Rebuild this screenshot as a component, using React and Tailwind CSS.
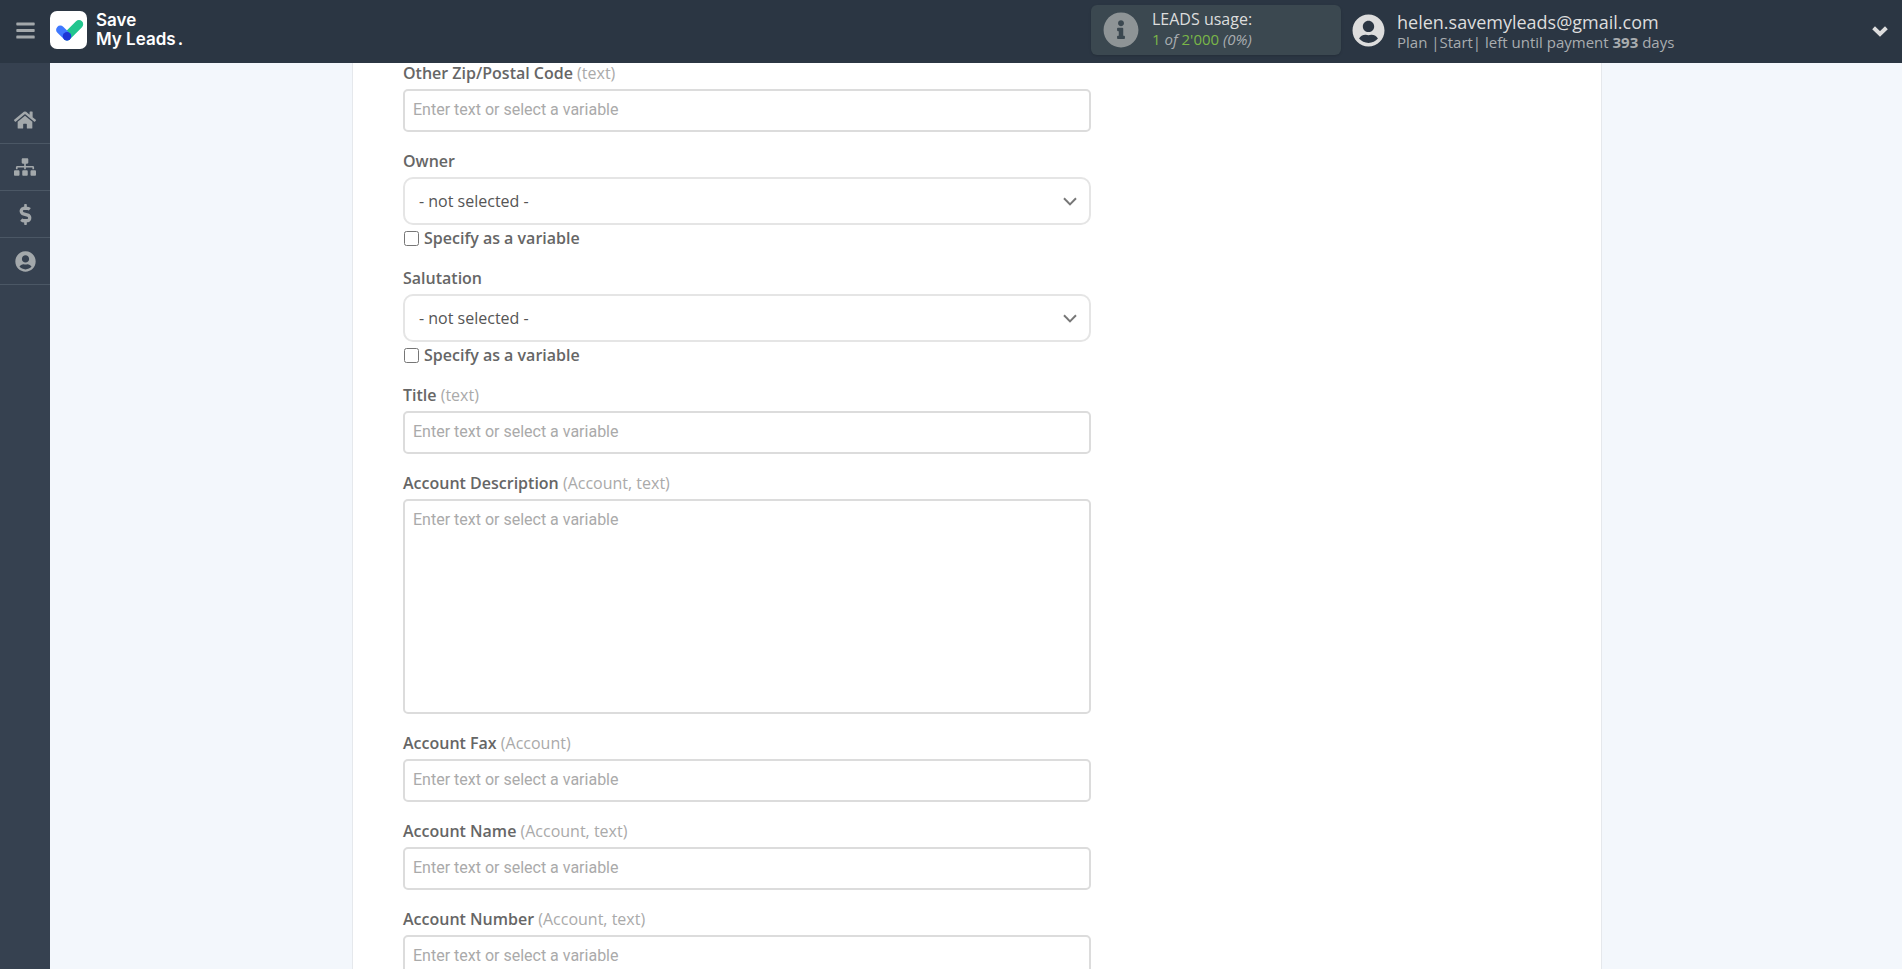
import { useState } from "react";
import {
  FaBars,
  FaDollarSign,
  FaHome,
  FaInfoCircle,
  FaSitemap,
  FaUserCircle,
} from "react-icons/fa";

const menu = [
  { label: "Home", icon: FaHome, size: "text-[22px]" },
  { label: "Connections", icon: FaSitemap, size: "text-[22px]" },
  { label: "Billing", icon: FaDollarSign, size: "text-[21px]" },
  { label: "Profile", icon: FaUserCircle, size: "text-[21px]" },
];

const fields = [
  { id: "other_zip", label: "Other Zip/Postal Code", hint: "(text)", type: "text" },
  { id: "owner", label: "Owner", type: "select" },
  { id: "salutation", label: "Salutation", type: "select" },
  { id: "title", label: "Title", hint: "(text)", type: "text" },
  { id: "account_description", label: "Account Description", hint: "(Account, text)", type: "textarea" },
  { id: "account_fax", label: "Account Fax", hint: "(Account)", type: "text" },
  { id: "account_name", label: "Account Name", hint: "(Account, text)", type: "text" },
  { id: "account_number", label: "Account Number", hint: "(Account, text)", type: "text" },
];

const placeholder = "Enter text or select a variable";

const inputClass =
  "block w-full rounded-[5px] border-2 border-[#dcdcdc] bg-white px-2 font-['Roboto',sans-serif] text-base text-[#555] placeholder:text-[#aaa] outline-none";

function Logo() {
  return (
    <a href="#" className="flex items-center gap-[9px]">
      <svg viewBox="0 0 37 38" className="h-[38px] w-[37px]" aria-hidden="true">
        <rect width="37" height="38" rx="7" fill="#fff" />
        <g strokeWidth="8.4" strokeLinecap="round" fill="none">
          <path d="M17 25.2 29 13.2" stroke="#21c58e" />
          <path d="M10.3 18.8 17 25.2" stroke="#3f78ff" />
        </g>
        <circle cx="17" cy="25.2" r="4.2" fill="#1c35d6" />
      </svg>
      <span className="font-['Inter',sans-serif] text-[17px] leading-[19px] font-semibold text-white">
        Save
        <br />
        My Leads<span className="ml-0.5">.</span>
      </span>
    </a>
  );
}

function Header() {
  return (
    <header className="flex h-[63px] shrink-0 items-center bg-[#2b3643] pb-[3px] text-[#ddd]">
      <button type="button" aria-label="Toggle menu" className="flex w-[50px] justify-center">
        <FaBars className="text-[21px] text-[#a3a8ab]" />
      </button>
      <Logo />

      <div className="ml-auto flex w-[811px] items-center">
        <div className="flex h-[50px] w-[250px] items-center gap-[13px] rounded-md bg-[#3b4850] px-3 shadow-sm">
          <FaInfoCircle className="text-[36px] text-[#8e9496]" />
          <div className="pb-0.5">
            <div className="text-base leading-5">LEADS usage:</div>
            <div className="text-[15px] leading-5 text-[#a9adb0] italic">
              <span className="text-[#7ab648] not-italic">1</span> of{" "}
              <span className="text-[#7ab648] not-italic">2'000</span> (0%)
            </div>
          </div>
        </div>
        <button type="button" className="flex flex-1 items-center gap-3 pr-3.5 pl-[11px] text-left">
          <FaUserCircle className="text-[33px] text-[#ddd]" />
          <span className="mt-1 flex-1">
            <span className="block text-lg leading-5">helen.savemyleads@gmail.com</span>
            <span className="block text-[15px] leading-5 text-[#a9adb0]">
              Plan |Start| left until payment <b>393</b> days
            </span>
          </span>
          <svg
            viewBox="0 0 16 11"
            className="mt-0.5 h-[11px] w-4"
            fill="none"
            stroke="currentColor"
            strokeWidth="4"
            aria-hidden="true"
          >
            <path d="M1.6 1.8 8 8 14.4 1.8" />
          </svg>
        </button>
      </div>
    </header>
  );
}

function Sidebar() {
  return (
    <nav className="w-[50px] shrink-0 bg-[#364150] pt-[34px]">
      {menu.map(({ label, icon: Icon, size }) => (
        <a
          key={label}
          href="#"
          aria-label={label}
          className="flex h-[47px] items-center justify-center border-b border-[#4b5765] text-[#a3a8ab]"
        >
          <Icon className={size} />
        </a>
      ))}
    </nav>
  );
}

function SelectField({ id }) {
  const [asVariable, setAsVariable] = useState(false);

  return (
    <>
      <div className="relative">
        <select
          id={id}
          className="block h-12 w-full appearance-none rounded-[10px] border-2 border-[#e5e5e5] bg-white px-3.5 text-base text-[#555] outline-none"
        >
          <option>- not selected -</option>
        </select>
        <svg
          viewBox="0 0 14 9"
          className="pointer-events-none absolute top-5 right-3.5 h-[9px] w-3.5"
          fill="none"
          stroke="#777"
          strokeWidth="2"
          aria-hidden="true"
        >
          <path d="M1 1.2 7 7.4 13 1.2" />
        </svg>
      </div>
      <label className="flex h-6 items-center gap-[5px] pt-0.5 text-base leading-5 font-semibold text-[#666]">
        <input
          type="checkbox"
          checked={asVariable}
          onChange={(e) => setAsVariable(e.target.checked)}
          className="ml-px size-[15px]"
        />
        Specify as a variable
      </label>
    </>
  );
}

function Field({ id, label, hint, type }) {
  return (
    <div>
      <label htmlFor={id} className="mb-1.5 block text-base leading-5 font-semibold text-[#666]">
        {label} {hint && <span className="font-normal text-[#aaa]">{hint}</span>}
      </label>
      {type === "text" && (
        <input id={id} type="text" placeholder={placeholder} className={`${inputClass} h-[43px] pb-0.5`} />
      )}
      {type === "textarea" && (
        <textarea
          id={id}
          placeholder={placeholder}
          className={`${inputClass} h-[215px] resize-none py-[7px]`}
        />
      )}
      {type === "select" && <SelectField id={id} />}
    </div>
  );
}

export default function App() {
  return (
    <div className="flex h-screen flex-col font-['Open_Sans',sans-serif]">
      <Header />
      <div className="flex min-h-0 flex-1">
        <Sidebar />
        <main className="flex-1 overflow-y-auto bg-[#f3f7fc] pl-0.5 [scrollbar-width:none]">
          <div className="mx-auto max-w-[1250px] border-x border-[#e5e8ec] bg-white px-[50px]">
            <form className="flex w-3/5 max-w-[688px] flex-col gap-[19px]">
              {fields.map((field) => (
                <Field key={field.id} {...field} />
              ))}
            </form>
          </div>
        </main>
      </div>
    </div>
  );
}
